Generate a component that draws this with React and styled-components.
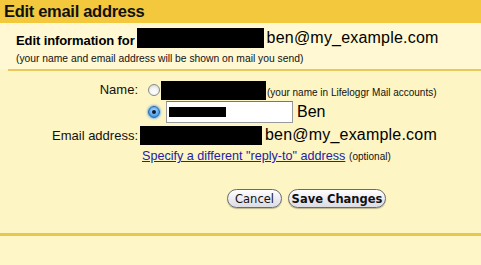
import React from "react";
import styled, { createGlobalStyle } from "styled-components";

const Global = createGlobalStyle`
  html, body { margin: 0; padding: 0; background: #fef6c6; }
  body { font-family: "Liberation Sans", Arial, sans-serif; color: #000; }
`;

const Page = styled.div`
  width: 481px;
  height: 265px;
  background: #fef6c6;
  overflow: hidden;
`;

const Header = styled.div`
  height: 23px;
  background: #f3c83d;
  display: flex;
  align-items: center;
  padding-left: 4px;
  font-size: 16.5px;
  font-weight: bold;
  color: #111;
  letter-spacing: -0.3px;
`;

const Info = styled.div`
  background: #fff8d2;
  height: 46px;
  padding: 5px 0 0 16px;
  box-sizing: border-box;
`;

const InfoLine = styled.div`
  display: flex;
  align-items: center;
  height: 20px;
`;

const Strong = styled.span`
  font-weight: bold;
  font-size: 13px;
  letter-spacing: -0.1px;
  margin-top: 5px;
  margin-right: 2px;
`;

const Redact = styled.span`
  display: inline-block;
  background: #000;
  width: ${(p) => p.$w}px;
  height: ${(p) => p.$h}px;
  margin: ${(p) => p.$m || "0"};
  flex: none;
`;

const Email = styled.span`
  font-size: 16px;
  margin-left: 3px;
  letter-spacing: 0.2px;
`;

const Small = styled.div`
  font-size: 10.3px;
  margin-top: 5px;
  color: #111;
`;

const Divider = styled.div`
  height: 2px;
  margin-left: 8px;
  background: #e9c95a;
`;

const Form = styled.div`
  height: 162px;
  background: #fdf5c3;
  box-sizing: border-box;
  padding-top: 9px;
`;

const Grid = styled.div`
  display: grid;
  grid-template-columns: 139px 1fr;
  row-gap: 0;
`;

const Label = styled.div`
  text-align: right;
  font-size: 13px;
  padding-right: 1px;
  padding-top: ${(p) => p.$pt || 0}px;
  color: #111;
`;

const Col = styled.div`
  display: flex;
  flex-direction: column;
`;

const Row = styled.div`
  display: flex;
  align-items: center;
  height: ${(p) => p.$h}px;
`;

const Radio = styled.span`
  width: 12px;
  height: 12px;
  border-radius: 50%;
  box-sizing: border-box;
  flex: none;
  margin-left: ${(p) => p.$ml}px;
  margin-right: ${(p) => p.$mr}px;
  position: relative;
  ${(p) =>
    p.$checked
      ? `
    background: radial-gradient(circle at 50% 40%, #bfe3ff 0%, #5aa9ec 55%, #2a6fc4 100%);
    border: 1px solid #2c64a8;
    box-shadow: 0 0 2px 1px #7fb9ef;
    &::after {
      content: "";
      position: absolute;
      width: 4px; height: 4px;
      border-radius: 50%;
      background: #0a1a33;
      left: 3px; top: 3px;
    }
  `
      : `
    background: radial-gradient(circle at 50% 70%, #ffffff 0%, #f4f4f4 45%, #cfcfcf 100%);
    border: 1px solid #8a8a8a;
  `}
`;

const Hint = styled.span`
  font-size: 10px;
  margin-left: 1px;
  margin-top: 4px;
  color: #111;
`;

const TextBox = styled.div`
  width: 127px;
  height: 22px;
  box-sizing: border-box;
  background: #fff;
  border: 1px solid #9a9a9a;
  border-top-color: #777;
  display: flex;
  align-items: center;
  padding-left: 2px;
  flex: none;
`;

const Ben = styled.span`
  font-size: 16px;
  margin-left: 4px;
`;

const LinkRow = styled.div`
  display: flex;
  align-items: baseline;
  margin-top: 1px;
`;

const Link = styled.a`
  font-size: 12.6px;
  color: #2323a6;
  text-decoration: underline;
  margin-left: 3px;
`;

const Buttons = styled.div`
  display: flex;
  gap: 6px;
  padding-left: 227px;
  margin-top: 26px;
`;

const Button = styled.button`
  font-family: "DejaVu Sans", "Liberation Sans", sans-serif;
  font-size: 11.5px;
  font-weight: ${(p) => (p.$bold ? "bold" : "normal")};
  height: 19px;
  width: ${(p) => p.$w}px;
  padding: 0;
  border-radius: 10px;
  border: 1px solid #6b6b6b;
  background: linear-gradient(#ffffff, #ececf2 50%, #dcdce4);
  color: #111;
  box-shadow: 0 1px 1px rgba(0, 0, 0, 0.25);
`;

const BottomLine = styled.div`
  height: 3px;
  background: #e8c84c;
`;

export default function App() {
  return (
    <Page>
      <Global />
      <Header>Edit email address</Header>
      <Info>
        <InfoLine>
          <Strong>Edit information for</Strong>
          <Redact $w={127} $h={20} />
          <Email>ben@my_example.com</Email>
        </InfoLine>
        <Small>(your name and email address will be shown on mail you send)</Small>
      </Info>
      <Divider />
      <Form>
        <Grid>
          <Label $pt={2}>Name:</Label>
          <Col>
            <Row $h={20}>
              <Radio $ml={9} $mr={1} />
              <Redact $w={105} $h={19} />
              <Hint>(your name in Lifeloggr Mail accounts)</Hint>
            </Row>
            <Row $h={24}>
              <Radio $checked $ml={9} $mr={6} />
              <TextBox>
                <Redact $w={57} $h={10} />
              </TextBox>
              <Ben>Ben</Ben>
            </Row>
          </Col>
          <Label $pt={4}>Email address:</Label>
          <Col>
            <Row $h={22}>
              <Redact $w={122} $h={19} $m="0 0 0 1px" />
              <Email>ben@my_example.com</Email>
            </Row>
          </Col>
          <div />
          <LinkRow>
            <Link href="#">Specify a different "reply-to" address</Link>
            <Hint>&nbsp;(optional)</Hint>
          </LinkRow>
        </Grid>
        <Buttons>
          <Button $w={55}>Cancel</Button>
          <Button $w={98} $bold>Save Changes</Button>
        </Buttons>
      </Form>
      <BottomLine />
    </Page>
  );
}
